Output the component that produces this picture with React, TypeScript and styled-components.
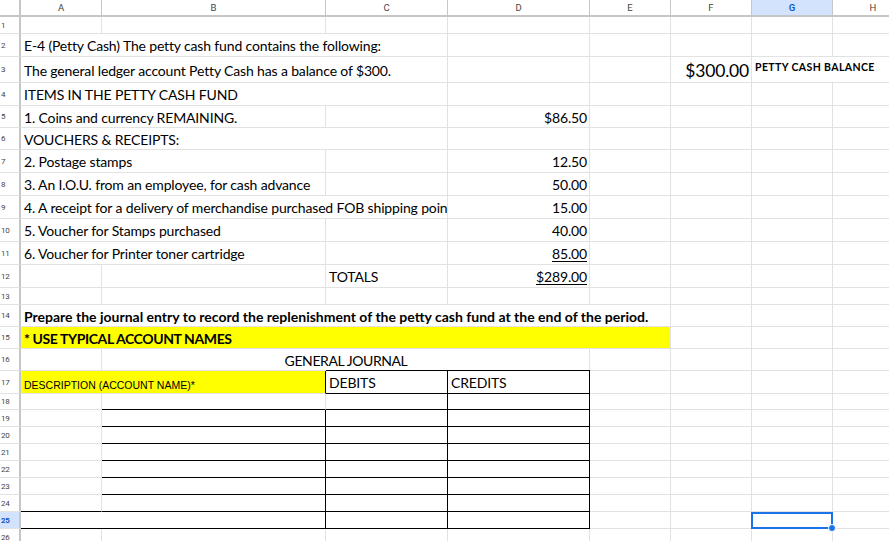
import React from 'react'
import styled, { createGlobalStyle, css } from 'styled-components'

const GlobalStyle = createGlobalStyle`
  html, body {
    margin: 0;
    padding: 0;
    background: #fff;
    overflow: hidden;
  }
`

const COLS = [81, 224, 122, 142, 81, 81, 81, 81]
const LETTERS = ['A', 'B', 'C', 'D', 'E', 'F', 'G', 'H']
const ROW_H = [17, 23, 26, 23, 22, 22, 23, 23, 23, 23, 23, 23, 17, 22, 22, 22, 23, 16, 17, 17, 17, 17, 17, 17, 17, 17]

const GRID = '#e2e2e2'
const HEAD_LINE = '#c4c7c5'
const BODY_FONT = `Lato, 'Open Sans', sans-serif`

type CellDef = {
  c: number
  span?: number
  text?: string
  align?: 'left' | 'right' | 'center'
  valign?: 'top' | 'center' | 'bottom'
  bold?: boolean
  bg?: string
  size?: number
  spacing?: number
  family?: string
  underline?: boolean
  bt?: boolean
  br?: boolean
  bb?: boolean
}

const Y = '#ffff00'

// journal box rows (19 - 24)
const boxRow = (): CellDef[] => [
  { c: 1, bb: true, br: true },
  { c: 2, bb: true, br: true },
  { c: 3, bb: true, br: true },
]

const ROWS: CellDef[][] = [
  [],
  [{ c: 0, span: 3, text: 'E-4 (Petty Cash) The petty cash fund contains the following:' }],
  [
    { c: 0, span: 3, text: 'The general ledger account Petty Cash has a balance of $300.' },
    { c: 5, text: '$300.00', align: 'right', size: 17.5, spacing: -0.2 },
    { c: 6, span: 2, text: 'PETTY CASH BALANCE', bold: true, size: 10.5, spacing: 0.4, valign: 'top' },
  ],
  [{ c: 0, span: 3, text: 'ITEMS IN THE PETTY CASH FUND' }],
  [
    { c: 0, span: 2, text: '1. Coins and currency REMAINING.' },
    { c: 3, text: '$86.50', align: 'right' },
  ],
  [{ c: 0, span: 3, text: 'VOUCHERS & RECEIPTS:' }],
  [
    { c: 0, span: 2, text: '2. Postage stamps' },
    { c: 3, text: '12.50', align: 'right' },
  ],
  [
    { c: 0, span: 2, text: '3. An I.O.U. from an employee, for cash advance' },
    { c: 3, text: '50.00', align: 'right' },
  ],
  [
    { c: 0, span: 3, text: '4. A receipt for a delivery of merchandise purchased FOB shipping point' },
    { c: 3, text: '15.00', align: 'right' },
  ],
  [
    { c: 0, span: 2, text: '5. Voucher for Stamps purchased' },
    { c: 3, text: '40.00', align: 'right' },
  ],
  [
    { c: 0, span: 2, text: '6. Voucher for Printer toner cartridge' },
    { c: 3, text: '85.00', align: 'right', underline: true },
  ],
  [
    { c: 2, text: 'TOTALS' },
    { c: 3, text: '$289.00', align: 'right', underline: true },
  ],
  [],
  [
    {
      c: 0,
      span: 5,
      bold: true,
      spacing: 0,
      text: 'Prepare the journal entry to record the replenishment of the petty cash fund at the end of the period.',
    },
  ],
  [{ c: 0, span: 5, bold: true, spacing: -0.4, bg: Y, text: '* USE TYPICAL ACCOUNT NAMES' }],
  [{ c: 1, span: 3, text: 'GENERAL JOURNAL', align: 'center', spacing: -0.4 }],
  [
    {
      c: 0,
      span: 2,
      bg: Y,
      br: true,
      text: 'DESCRIPTION (ACCOUNT NAME)*',
      family: `'Liberation Sans', Arial, sans-serif`,
      size: 10.5,
      spacing: 0,
      valign: 'bottom',
    },
    { c: 2, text: 'DEBITS', bt: true, br: true, bb: true },
    { c: 3, text: 'CREDITS', bt: true, br: true, bb: true },
  ],
  [
    { c: 1, bb: true },
    { c: 2, bb: true, br: true },
    { c: 3, bb: true, br: true },
  ],
  boxRow(),
  boxRow(),
  boxRow(),
  boxRow(),
  boxRow(),
  [{ c: 0, bb: true }, ...boxRow()],
  [
    { c: 0, span: 2, bb: true, br: true },
    { c: 2, bb: true, br: true },
    { c: 3, bb: true, br: true },
  ],
  [],
]

const SELECTED = { row: 25, col: 6 }

// fill the gaps of a row with empty cells so every gridline is drawn
const fillRow = (defs: CellDef[]): CellDef[] => {
  const out: CellDef[] = []
  let col = 0
  const sorted = [...defs].sort((a, b) => a.c - b.c)
  sorted.forEach((d) => {
    while (col < d.c) out.push({ c: col++ })
    out.push(d)
    col = d.c + (d.span || 1)
  })
  while (col < COLS.length) out.push({ c: col++ })
  return out
}

const Viewport = styled.div`
  width: 889px;
  height: 541px;
  overflow: hidden;
  background: #fff;
`

const Sheet = styled.div`
  display: grid;
  width: ${21 + COLS.reduce((a, b) => a + b, 0)}px;
  grid-template-columns: 21px ${COLS.map((w) => `${w}px`).join(' ')};
  grid-template-rows: 17px ${ROW_H.map((h) => `${h}px`).join(' ')};
`

const Corner = styled.div`
  grid-column: 1;
  grid-row: 1;
  box-sizing: border-box;
  background: #fff;
  border-right: 2px solid ${HEAD_LINE};
  border-bottom: 2px solid ${HEAD_LINE};
`

const ColHead = styled.div<{ $active?: boolean }>`
  grid-row: 1;
  box-sizing: border-box;
  display: flex;
  align-items: center;
  justify-content: center;
  background: ${(p) => (p.$active ? '#d3e3fd' : '#fff')};
  border-right: 1px solid ${HEAD_LINE};
  border-bottom: 2px solid ${HEAD_LINE};
  font-family: Roboto, 'Liberation Sans', sans-serif;
  font-size: 9.5px;
  color: ${(p) => (p.$active ? '#0b57d0' : '#444')};
  font-weight: ${(p) => (p.$active ? 600 : 400)};
`

const RowHead = styled.div<{ $active?: boolean }>`
  grid-column: 1;
  box-sizing: border-box;
  display: flex;
  align-items: center;
  padding-left: 1px;
  background: ${(p) => (p.$active ? '#d3e3fd' : '#fff')};
  border-right: 2px solid ${HEAD_LINE};
  border-bottom: 1px solid ${GRID};
  font-family: Roboto, 'Liberation Sans', sans-serif;
  font-size: 8px;
  letter-spacing: -0.3px;
  color: ${(p) => (p.$active ? '#0b57d0' : '#444')};
  font-weight: ${(p) => (p.$active ? 700 : 400)};
  overflow: hidden;
`

const alignMap = { left: 'flex-start', right: 'flex-end', center: 'center' }
const valignMap = { top: 'flex-start', center: 'center', bottom: 'flex-end' }

type CellProps = {
  $align: 'left' | 'right' | 'center'
  $valign: 'top' | 'center' | 'bottom'
  $bold?: boolean
  $bg?: string
  $size: number
  $spacing: number
  $family: string
  $underline?: boolean
  $bt?: boolean
  $br?: boolean
  $bb?: boolean
  $selected?: boolean
}

const Cell = styled.div<CellProps>`
  position: relative;
  z-index: ${(p) => (p.$selected ? 2 : 'auto')};
  box-sizing: border-box;
  min-width: 0;
  display: flex;
  align-items: ${(p) => valignMap[p.$valign]};
  justify-content: ${(p) => alignMap[p.$align]};
  padding: ${(p) => (p.$valign === 'top' ? '5px' : p.$valign === 'bottom' ? '0' : '2px')} 2px
    ${(p) => (p.$valign === 'bottom' ? '3px' : '0')} 3px;
  background: ${(p) => p.$bg || '#fff'};
  border-right: 1px solid ${(p) => (p.$br ? '#000' : GRID)};
  border-bottom: 1px solid ${(p) => (p.$bb ? '#000' : GRID)};
  ${(p) =>
    p.$bt &&
    css`
      box-shadow: 0 -1px 0 #000;
    `}
  font-family: ${(p) => p.$family};
  font-size: ${(p) => p.$size}px;
  letter-spacing: ${(p) => p.$spacing}px;
  font-weight: ${(p) => (p.$bold ? 700 : 400)};
  color: #000;
  line-height: 1;
  white-space: nowrap;
  overflow: ${(p) => (p.$selected ? 'visible' : 'hidden')};
  text-decoration: ${(p) => (p.$underline ? 'underline' : 'none')};
  text-underline-offset: 2px;
`

const SelectionBox = styled.div`
  position: absolute;
  left: -1px;
  top: 0;
  right: -1px;
  bottom: -1px;
  border: 2px solid #1a73e8;
  pointer-events: none;
`

const FillHandle = styled.div`
  position: absolute;
  right: -5px;
  bottom: -5px;
  width: 8px;
  height: 8px;
  border-radius: 50%;
  background: #1a73e8;
  border: 1px solid #fff;
  box-sizing: border-box;
`

export default function App() {
  return (
    <Viewport>
      <GlobalStyle />
      <Sheet>
        <Corner />
        {LETTERS.map((l, i) => (
          <ColHead key={l} style={{ gridColumn: i + 2 }} $active={i === SELECTED.col}>
            {l}
          </ColHead>
        ))}
        {ROWS.map((defs, r) => {
          const rowNum = r + 1
          return (
            <React.Fragment key={`row${rowNum}`}>
              <RowHead style={{ gridRow: r + 2 }} $active={rowNum === SELECTED.row}>
                {rowNum}
              </RowHead>
              {fillRow(defs).map((d) => {
                const selected = rowNum === SELECTED.row && d.c === SELECTED.col
                return (
                  <Cell
                    key={`c${rowNum}-${d.c}`}
                    style={{ gridColumn: `${d.c + 2} / span ${d.span || 1}`, gridRow: r + 2 }}
                    $align={d.align || 'left'}
                    $valign={d.valign || 'center'}
                    $bold={d.bold}
                    $bg={d.bg}
                    $size={d.size || 14}
                    $spacing={d.spacing ?? -0.15}
                    $family={d.family || BODY_FONT}
                    $underline={d.underline}
                    $bt={d.bt}
                    $br={d.br}
                    $bb={d.bb}
                    $selected={selected}
                  >
                    {d.text}
                    {selected && (
                      <SelectionBox>
                        <FillHandle />
                      </SelectionBox>
                    )}
                  </Cell>
                )
              })}
            </React.Fragment>
          )
        })}
      </Sheet>
    </Viewport>
  )
}
